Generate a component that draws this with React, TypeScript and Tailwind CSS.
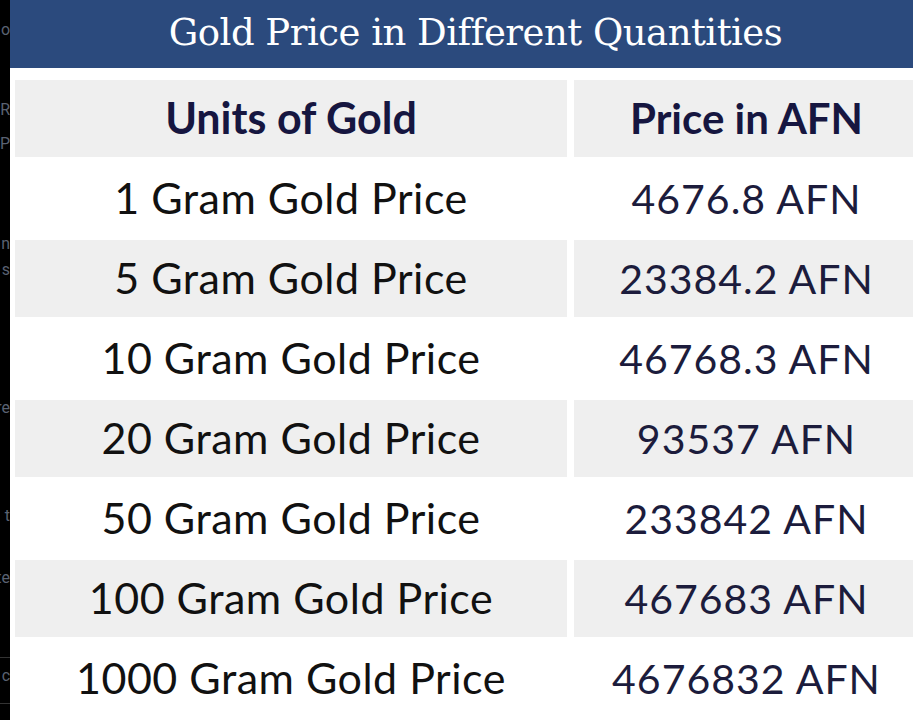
import React from "react";

const rows = [
  ["1 Gram Gold Price", "4676.8 AFN"],
  ["5 Gram Gold Price", "23384.2 AFN"],
  ["10 Gram Gold Price", "46768.3 AFN"],
  ["20 Gram Gold Price", "93537 AFN"],
  ["50 Gram Gold Price", "233842 AFN"],
  ["100 Gram Gold Price", "467683 AFN"],
  ["1000 Gram Gold Price", "4676832 AFN"],
];

// cut-off letters of the page behind, peeking out on the left edge
const edge = [
  { top: "top-[22px]", t: "o" },
  { top: "top-[102px]", t: "R" },
  { top: "top-[136px]", t: "P" },
  { top: "top-[236px]", t: "n" },
  { top: "top-[262px]", t: "s" },
  { top: "top-[400px]", t: "re" },
  { top: "top-[508px]", t: "t" },
  { top: "top-[570px]", t: "te" },
  { top: "top-[668px]", t: "c" },
];

function App() {
  return (
    <div className="flex w-[913px] h-[720px] overflow-hidden bg-white font-['Lato',sans-serif]">
      <div className="relative w-[10px] shrink-0 bg-black overflow-hidden">
        {edge.map((e) => (
          <span
            key={e.top}
            className={`absolute right-0 ${e.top} text-[16px] leading-none text-[#5a6272] font-['Roboto',sans-serif]`}
          >
            {e.t}
          </span>
        ))}
        <div className="absolute left-0 right-0 top-[657px] h-px bg-[#333]" />
        <div className="absolute left-0 right-0 top-[703px] h-px bg-[#333]" />
      </div>

      <div className="flex flex-col flex-1 min-w-0">
        <div className="flex items-center justify-center h-[68px] pl-[28px] pb-[2px] bg-[#2b4a7d] text-white text-[37px] font-['DejaVu_Serif',serif] tracking-[-0.5px]">
          Gold Price in Different Quantities
        </div>

        <div className="flex flex-col gap-[3px] pt-[12px] pl-[5px]">
          <div className="grid grid-cols-[552px_1fr] gap-[7px] h-[77px]">
            <div className="flex items-center justify-center bg-[#efefef] text-[43px] font-bold text-[#161640]">
              Units of Gold
            </div>
            <div className="flex items-center justify-center pl-[6px] bg-[#efefef] text-[42px] font-bold text-[#161640]">
              Price in AFN
            </div>
          </div>
          {rows.map(([unit, price], i) => (
            <div
              key={unit}
              className="grid grid-cols-[552px_1fr] gap-[7px] h-[77px]"
            >
              <div
                className={`flex items-center justify-center text-[43px] text-[#111] tracking-[0.5px] ${
                  i % 2 === 1 ? "bg-[#efefef]" : "bg-white"
                }`}
              >
                {unit}
              </div>
              <div
                className={`flex items-center justify-center pl-[6px] text-[41px] text-[#1c1c3c] tracking-[1px] ${
                  i % 2 === 1 ? "bg-[#efefef]" : "bg-white"
                }`}
              >
                {price}
              </div>
            </div>
          ))}
        </div>
      </div>
    </div>
  );
}

export default App;
